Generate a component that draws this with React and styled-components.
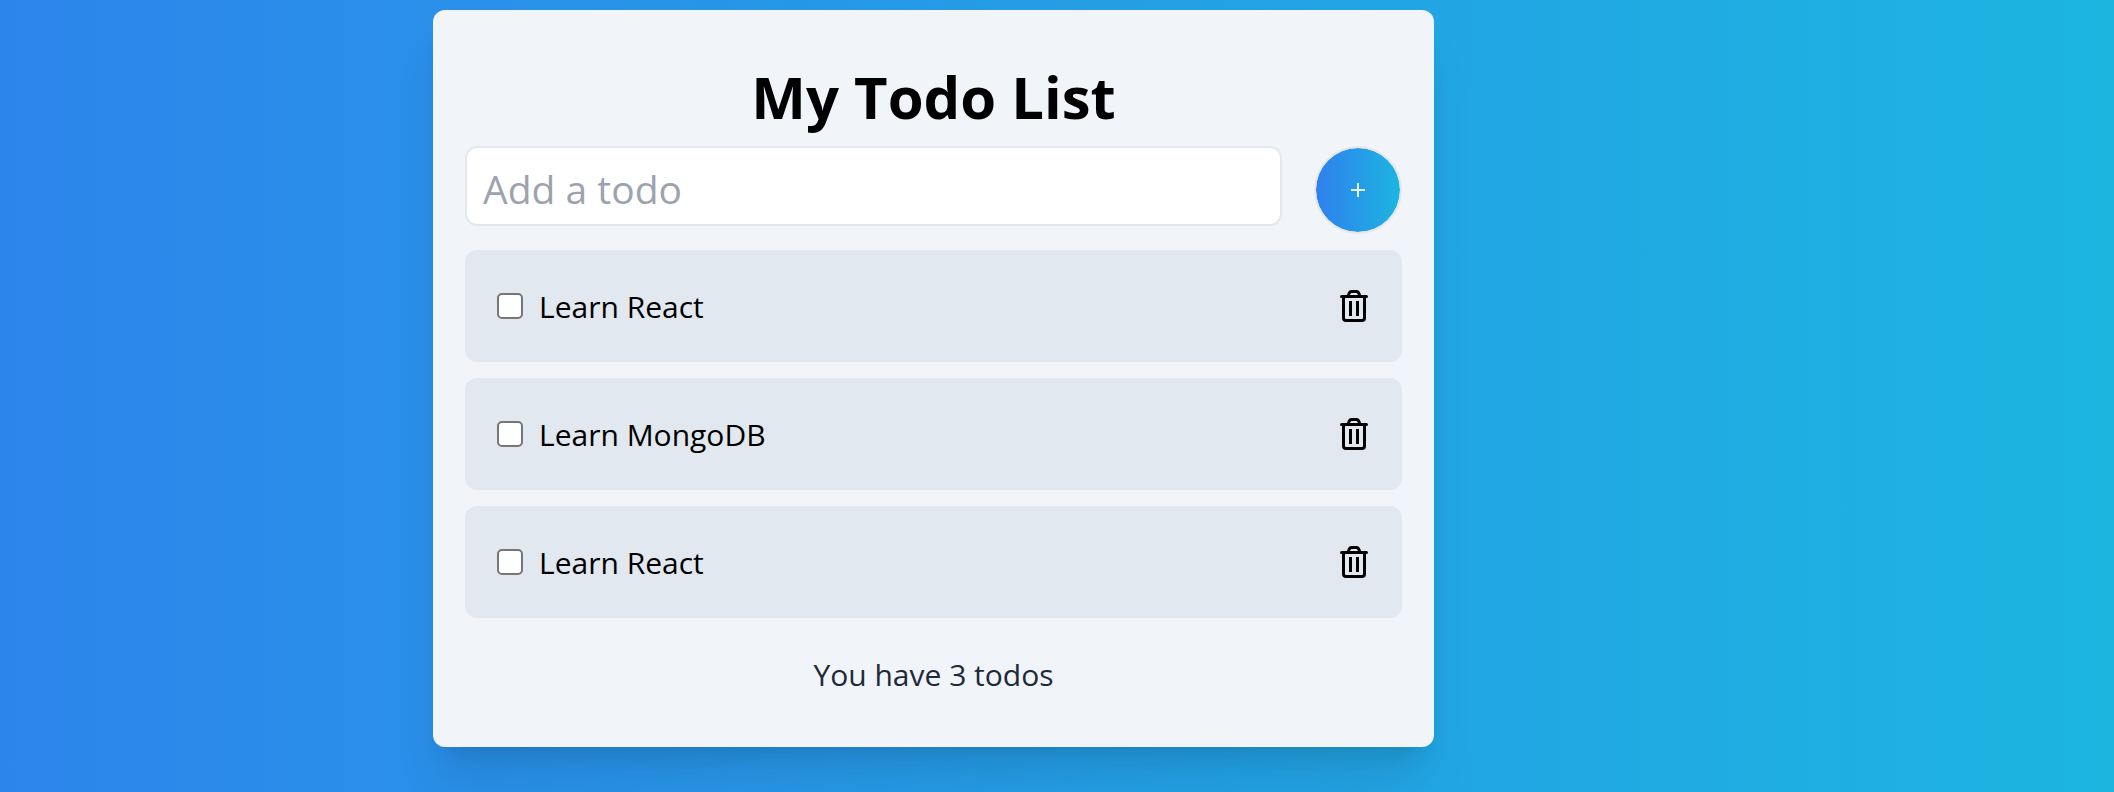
import React, { useState } from "react";
import styled, { createGlobalStyle } from "styled-components";

const GlobalStyle = createGlobalStyle`
  *, *::before, *::after { box-sizing: border-box; }
  body {
    margin: 0;
    font-family: "Segoe UI", "Open Sans", "Noto Sans", sans-serif;
    color: #000;
  }
`;

const Page = styled.div`
  min-height: 100vh;
  padding: 10px 247px 44px 0;
  background: linear-gradient(to right, #2f80ed -247px, #1cb5e0 100%);

  @media (max-width: 1280px) {
    padding: 10px 16px 44px;
  }
`;

const Card = styled.main`
  width: 100%;
  max-width: 1001px;
  margin: 0 auto;
  padding: 32px;
  border-radius: 12px;
  background: #f1f5f9;
  box-shadow: 0 40px 50px -10px rgba(0, 0, 0, 0.1), 0 16px 20px -12px rgba(0, 0, 0, 0.1);
`;

const Title = styled.h1`
  margin: 15px 0 9px;
  font-size: 58px;
  line-height: 80px;
  font-weight: 700;
  text-align: center;
`;

const AddForm = styled.form`
  display: flex;
  align-items: flex-start;
  justify-content: space-between;
  gap: 32px;
`;

const TodoInput = styled.input`
  flex: 1;
  min-width: 0;
  height: 80px;
  padding: 4px 16px 0;
  border: 2px solid #e5e7eb;
  border-radius: 12px;
  background: #fff;
  font-family: inherit;
  font-size: 39px;
  color: #000;
  &::placeholder { color: #9ca3af; opacity: 1; }
`;

const AddButton = styled.button`
  display: flex;
  align-items: center;
  justify-content: center;
  width: 88px;
  height: 88px;
  padding: 0;
  border: 2px solid #e5e7eb;
  border-radius: 50%;
  background: linear-gradient(to right, #2f80ed, #1cb5e0) padding-box;
  color: #e3f1fb;
  cursor: pointer;
`;

const List = styled.ul`
  display: grid;
  gap: 16px;
  margin: 16px 0 0;
  padding: 0;
  list-style: none;
`;

const Item = styled.li`
  display: flex;
  align-items: center;
  justify-content: space-between;
  min-height: 112px;
  padding: 0 34px 0 32px;
  border-radius: 12px;
  background: #e2e8f0;
`;

const ItemLabel = styled.label`
  display: flex;
  align-items: center;
  gap: 16px;
  font-size: 30px;
  line-height: 48px;
`;

const ItemText = styled.span`
  padding-top: 2px;
`;

const Checkbox = styled.input`
  appearance: none;
  width: 26px;
  height: 26px;
  margin: 0;
  border: 2px solid #767676;
  border-radius: 5px;
  background: #fff;
  &:checked { background: #2f80ed; }
`;

const DeleteButton = styled.button`
  display: flex;
  padding: 0;
  border: 0;
  background: none;
  color: #000;
  cursor: pointer;
`;

const Summary = styled.p`
  margin: 33px 0 16px;
  font-size: 30px;
  line-height: 48px;
  color: #1e293b;
  text-align: center;
`;

const PlusIcon = () => (
  <svg width="14" height="14" viewBox="0 0 14 14" fill="none" stroke="currentColor" strokeWidth="2" aria-hidden="true">
    <path d="M7 0v14M0 7h14" />
  </svg>
);

const TrashIcon = () => (
  <svg width="28" height="32" viewBox="0 0 28 32" fill="none" stroke="currentColor" strokeWidth="3" aria-hidden="true">
    <path d="M1.5 6.5h25" strokeLinecap="round" />
    <path d="M8 6l1.300-3Q10 1.500 11.500 1.500h5Q18 1.500 18.700 3L20 6" />
    <path d="M3.500 6.500V28a2.500 2.500 0 0 0 2.500 2.500h16a2.500 2.500 0 0 0 2.500-2.500V6.500" />
    <path d="M10.500 11v15M17.500 11v15" />
  </svg>
);

const initialTodos = ["Learn React", "Learn MongoDB", "Learn React"].map((text, id) => ({ id, text }));

export default function App() {
  const [todos, setTodos] = useState(initialTodos);
  const [draft, setDraft] = useState("");

  const addTodo = (event) => {
    event.preventDefault();
    if (!draft.trim()) return;
    setTodos([...todos, { id: Date.now(), text: draft.trim() }]);
    setDraft("");
  };

  return (
    <Page>
      <GlobalStyle />
      <Card>
        <Title>My Todo List</Title>
        <AddForm onSubmit={addTodo}>
          <TodoInput
            type="text"
            placeholder="Add a todo"
            aria-label="Add a todo"
            value={draft}
            onChange={(event) => setDraft(event.target.value)}
          />
          <AddButton type="submit" aria-label="Add"><PlusIcon /></AddButton>
        </AddForm>
        <List>
          {todos.map((todo) => (
            <Item key={todo.id}>
              <ItemLabel>
                <Checkbox type="checkbox" />
                <ItemText>{todo.text}</ItemText>
              </ItemLabel>
              <DeleteButton
                type="button"
                aria-label={`Delete ${todo.text}`}
                onClick={() => setTodos(todos.filter((t) => t.id !== todo.id))}
              >
                <TrashIcon />
              </DeleteButton>
            </Item>
          ))}
        </List>
        <Summary>You have {todos.length} todos</Summary>
      </Card>
    </Page>
  );
}
